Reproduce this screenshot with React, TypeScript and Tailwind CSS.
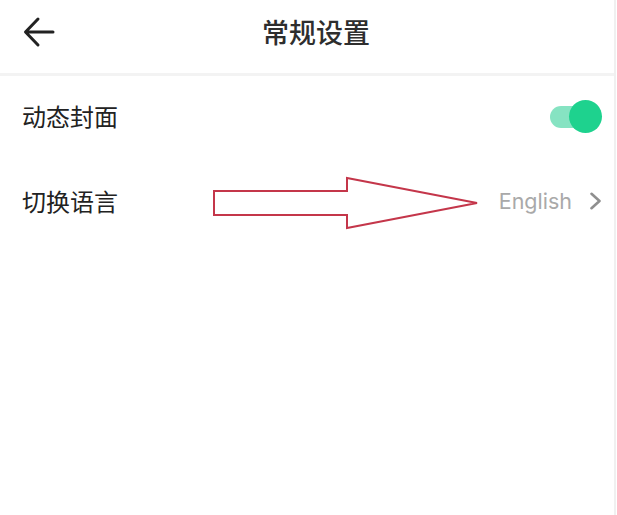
const cjk = { fontFamily: '"Noto Sans CJK SC", "Noto Sans", sans-serif' };

function BackArrow() {
  return (
    <svg width="32" height="32" viewBox="0 0 32 32" fill="none">
      <path d="M30 16 H3 M15 3 L2.5 16 L15 29" stroke="#222" strokeWidth="3" strokeLinecap="round" strokeLinejoin="round" />
    </svg>
  );
}

function Toggle() {
  return (
    <div className="relative w-[52px] h-[33px]">
      <div className="absolute left-0 top-[6px] w-[42px] h-[22px] rounded-full bg-[#86e3c2]" />
      <div className="absolute right-0 top-0 w-[33px] h-[33px] rounded-full bg-[#1ed28e]" />
    </div>
  );
}

function Chevron() {
  return (
    <svg width="13" height="18" viewBox="0 0 13 18" fill="none">
      <path d="M2.5 1.8 L10.5 9 L2.5 16.2" stroke="#8f8f8f" strokeWidth="2.6" strokeLinecap="round" strokeLinejoin="round" />
    </svg>
  );
}

export default function App() {
  return (
    <div className="relative w-[617px] h-[515px] bg-white overflow-hidden">
      <div className="w-[616px] h-full border-r-2 border-[#f0f0f0]">
        {/* header */}
        <div className="h-[64px] flex items-center pl-[23px]">
          <BackArrow />
          <span className="ml-[207px] text-[27px] font-medium text-[#2e2e2e]" style={cjk}>
            常规设置
          </span>
        </div>
        <div className="mt-[9px] h-[3px] bg-[#f3f3f3]" />

        {/* rows */}
        <div className="h-[80px] flex items-center justify-between pl-[22px] pr-[12px]">
          <span className="text-[24px] text-[#222]" style={cjk}>动态封面</span>
          <Toggle />
        </div>
        <div className="h-[90px] flex items-center justify-between pl-[22px] pr-[12px]">
          <span className="text-[24px] text-[#222]" style={cjk}>切换语言</span>
          <div className="flex items-center gap-[17px]">
            <span className="text-[21.5px] text-[#a9a9a9]" style={{ fontFamily: 'Inter, "Liberation Sans", sans-serif' }}>
              English
            </span>
            <Chevron />
          </div>
        </div>
      </div>

      {/* red annotation arrow drawn over the page */}
      <svg className="absolute inset-0 pointer-events-none" width="617" height="515" viewBox="0 0 617 515">
        <path
          d="M214 191 L347 191 L347 178 L477 203 L347 228 L347 215 L214 215 Z"
          fill="white"
          stroke="#c4364a"
          strokeWidth="2"
          strokeLinejoin="miter"
        />
      </svg>
    </div>
  );
}
